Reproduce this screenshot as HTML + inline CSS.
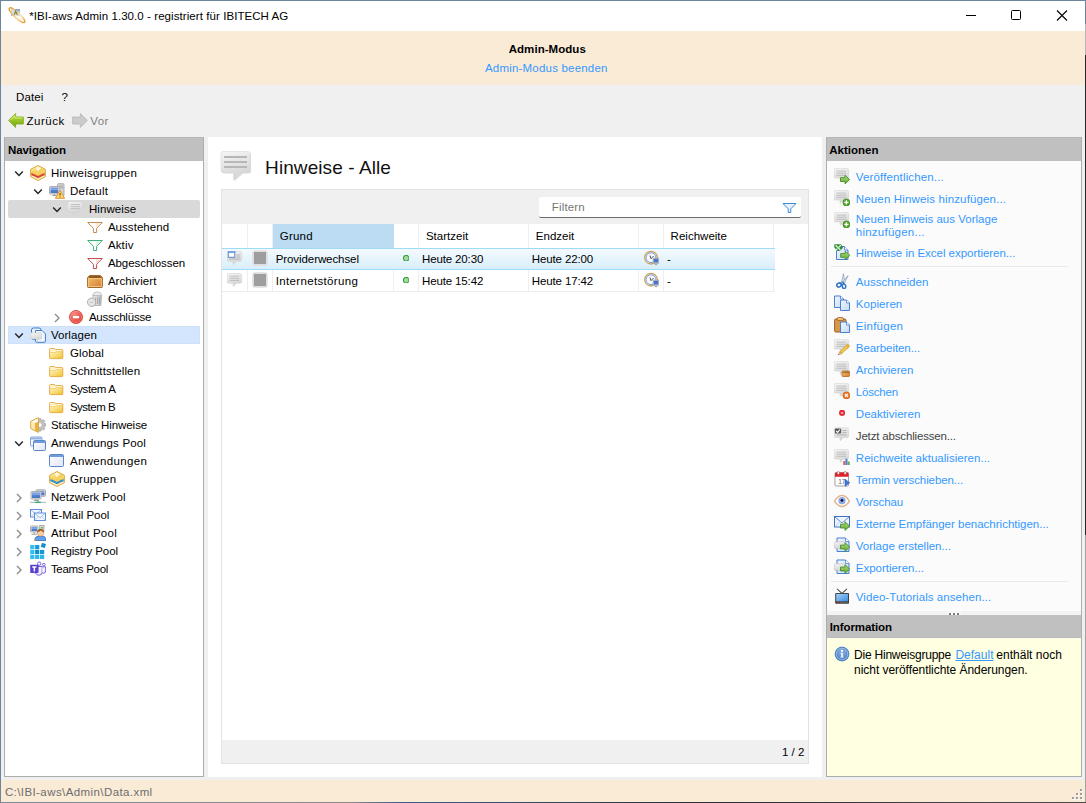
<!DOCTYPE html>
<html lang="de"><head><meta charset="utf-8"><title>IBI-aws Admin</title>
<style>
html,body{margin:0;padding:0;background:#f0f0f0;}
body{width:1086px;height:803px;overflow:hidden;font-family:"Liberation Sans",sans-serif;font-size:12px;}
#win{position:relative;width:1086px;height:803px;background:#f0f0f0;overflow:hidden;}
#win div,#win span,#win svg{position:absolute;}
.t{white-space:pre;line-height:16px;height:16px;}
.ic{width:16px;height:16px;}
.ic svg{left:0;top:0;}

</style></head><body>
<div id="win">
<svg width="0" height="0" style="left:0;top:0"><defs>
<linearGradient id="gBub" x1="0" y1="0" x2="0.3" y2="1"><stop offset="0" stop-color="#f6f6f6"/><stop offset="1" stop-color="#d4d4d4"/></linearGradient>
<linearGradient id="gGold" x1="0" y1="0" x2="1" y2="1"><stop offset="0" stop-color="#fdf0b0"/><stop offset="1" stop-color="#f2b92e"/></linearGradient>
<linearGradient id="gFold" x1="0" y1="0" x2="0.700" y2="1"><stop offset="0" stop-color="#fffbe6"/><stop offset="0.450" stop-color="#fbe9a2"/><stop offset="1" stop-color="#f4c93c"/></linearGradient>
<linearGradient id="gBox" x1="0" y1="0" x2="1" y2="1"><stop offset="0" stop-color="#f8c468"/><stop offset="1" stop-color="#cf7a3a"/></linearGradient>
<linearGradient id="gWin" x1="0" y1="0" x2="1" y2="1"><stop offset="0" stop-color="#ffffff"/><stop offset="1" stop-color="#e0e5f6"/></linearGradient>
<linearGradient id="gPage" x1="0" y1="0" x2="1" y2="1"><stop offset="0" stop-color="#f2f7fe"/><stop offset="1" stop-color="#c4d9f6"/></linearGradient>
<linearGradient id="gScr" x1="0" y1="0" x2="0" y2="1"><stop offset="0" stop-color="#6f99de"/><stop offset="0.500" stop-color="#86aae6"/><stop offset="0.550" stop-color="#4f7fcc"/><stop offset="1" stop-color="#4876c6"/></linearGradient>
<linearGradient id="gGrn" x1="0" y1="0" x2="0" y2="1"><stop offset="0" stop-color="#b4de84"/><stop offset="1" stop-color="#5ca62c"/></linearGradient>
<linearGradient id="gBack" x1="0" y1="0" x2="0" y2="1"><stop offset="0" stop-color="#c3e23a"/><stop offset="1" stop-color="#6ea412"/></linearGradient>
<radialGradient id="gRed" cx="0.35" cy="0.3" r="0.8"><stop offset="0" stop-color="#f58a80"/><stop offset="1" stop-color="#dc3b32"/></radialGradient>
<radialGradient id="gInfo" cx="0.5" cy="0.35" r="0.7"><stop offset="0" stop-color="#8db4e2"/><stop offset="1" stop-color="#3f78c0"/></radialGradient>
<linearGradient id="gTv" x1="0" y1="0" x2="1" y2="1"><stop offset="0" stop-color="#9fd0f8"/><stop offset="1" stop-color="#3f8fe0"/></linearGradient>
<linearGradient id="gCan" x1="0" y1="0" x2="1" y2="0"><stop offset="0" stop-color="#f2f2f2"/><stop offset="1" stop-color="#b8b8b8"/></linearGradient>
</defs></svg>
<!-- window frame -->
<div style="left:0;top:0;width:1086px;height:1px;background:#6a859c"></div>
<div style="left:0;top:0;width:1px;height:803px;background:#6a859c"></div>
<div style="left:1px;top:1px;width:1084px;height:30px;background:#fff"></div>
<div style="left:1085px;top:0;width:1px;height:803px;background:#a2a2a2"></div>
<div style="left:1085px;top:55px;width:1px;height:480px;background:#262626"></div>
<div style="left:1085px;top:24px;width:1px;height:31px;background:#b6b6b6"></div>
<div style="left:1085px;top:0;width:1px;height:24px;background:#6a859c"></div>
<!-- admin band -->
<div style="left:1px;top:31px;width:1084px;height:54px;background:#faebd7"></div>
<!-- status bar -->
<div style="left:1px;top:780px;width:1084px;height:22px;background:#faebd7"></div>
<div style="left:0;top:802px;width:1086px;height:1px;background:linear-gradient(90deg,#7b8b99 0,#8a8a8a 350px,#3a5f8a 400px,#2a2f3a 700px,#4a4a4a 1086px)"></div>
<!-- window buttons -->
<svg style="left:950px;top:1px" width="135" height="30" viewBox="0 0 135 30">
 <path d="M16 14.500 H26" stroke="#000" stroke-width="1"/>
 <rect x="61.500" y="9.500" width="9" height="9" rx="1" fill="none" stroke="#000" stroke-width="1"/>
 <path d="M107 9.500 L117 19.500 M117 9.500 L107 19.500" stroke="#000" stroke-width="1.1"/>
</svg>
<!-- nav panel -->
<div style="left:4px;top:137px;width:200px;height:640px;background:#fff;box-sizing:border-box;border:1px solid #adadad;border-top-color:#b6b6b6"></div>
<div style="left:5px;top:138px;width:198px;height:23px;background:#c0c0c0"></div>
<div style="left:8px;top:200px;width:192px;height:18px;background:#d9d9d9;border-radius:2px"></div>
<div style="left:8px;top:326px;width:192px;height:18px;background:#d3e6fd;box-sizing:border-box;border:1px solid #cde1fb"></div>
<!-- main -->
<div style="left:208px;top:137px;width:614px;height:640px;background:#fff"></div>
<div style="left:221px;top:189px;width:588px;height:575px;box-sizing:border-box;border:1px solid #e2e2e2;background:#fff"></div>
<div style="left:222px;top:190px;width:586px;height:34px;background:#f0f0f0"></div>
<div style="left:222px;top:740px;width:586px;height:23px;background:#f0f0f0"></div>
<!-- filter input -->
<div style="left:539px;top:197px;width:262px;height:21px;background:#fff;border-radius:2px;box-sizing:border-box;border-bottom:1px solid #6b6b6b"></div>
<svg style="left:782px;top:202px" width="15" height="12" viewBox="0 0 15 12"><path d="M1 1.500 H14 L8.800 6.800 V10.500 H6.200 V6.800 Z" fill="#e8f2fc" stroke="#3f8ad8" stroke-width="1"/></svg>
<!-- grid header -->
<div style="left:393px;top:224px;width:1px;height:68px;background:#eeeeee"></div>
<div style="left:273px;top:224px;width:121px;height:24px;background:#bcdcf4"></div>
<div style="left:247px;top:224px;width:1px;height:68px;background:#eeeeee"></div>
<div style="left:272px;top:224px;width:1px;height:68px;background:#eeeeee"></div>
<div style="left:418px;top:224px;width:1px;height:68px;background:#eeeeee"></div>
<div style="left:528px;top:224px;width:1px;height:68px;background:#eeeeee"></div>
<div style="left:638px;top:224px;width:1px;height:68px;background:#eeeeee"></div>
<div style="left:663px;top:224px;width:1px;height:68px;background:#eeeeee"></div>
<div style="left:773px;top:224px;width:1px;height:68px;background:#eeeeee"></div>
<div style="left:222px;top:291px;width:552px;height:1px;background:#ececec"></div>
<!-- selected row -->
<div style="left:222px;top:248px;width:553px;height:22px;box-sizing:border-box;border-top:1px solid #9ddcf8;border-bottom:1px solid #9ddcf8;background:linear-gradient(#f4fafe,#d8eefb)"></div>
<!-- actions panel -->
<div style="left:826px;top:137px;width:256px;height:475px;background:#fbfbfb;box-sizing:border-box;border:1px solid #adadad;border-top-color:#b6b6b6;border-bottom:none"></div>
<div style="left:827px;top:138px;width:254px;height:23px;background:#c0c0c0"></div>
<div style="left:831px;top:266px;width:237px;height:1px;background:#e8e8e8"></div>
<div style="left:831px;top:581px;width:237px;height:1px;background:#e8e8e8"></div>
<div style="left:826px;top:611px;width:256px;height:4px;background:#f3f3f3;box-sizing:border-box;border-left:1px solid #adadad;border-right:1px solid #adadad"></div>
<div style="left:947px;top:612px;width:14px;height:3px;background:#fafafa"></div>
<div style="left:949px;top:613px;width:2px;height:2px;background:#7c7c7c"></div>
<div style="left:953px;top:613px;width:2px;height:2px;background:#7c7c7c"></div>
<div style="left:957px;top:613px;width:2px;height:2px;background:#7c7c7c"></div>
<!-- info panel -->
<div style="left:826px;top:615px;width:256px;height:162px;background:#ffffe1;box-sizing:border-box;border:1px solid #adadad;border-top-color:#c0c0c0"></div>
<div style="left:827px;top:616px;width:254px;height:22px;background:#c0c0c0;box-sizing:border-box;border-bottom:1px solid #bbbbbe"></div>
<!-- resize grip -->
<svg style="left:1070px;top:787px" width="14" height="14" viewBox="0 0 14 14"><rect x="11" y="3" width="2" height="2" fill="#fffaf2"/><rect x="7" y="7" width="2" height="2" fill="#fffaf2"/><rect x="11" y="7" width="2" height="2" fill="#fffaf2"/><rect x="3" y="11" width="2" height="2" fill="#fffaf2"/><rect x="7" y="11" width="2" height="2" fill="#fffaf2"/><rect x="11" y="11" width="2" height="2" fill="#fffaf2"/><rect x="10" y="2" width="2" height="2" fill="#9a9da1"/><rect x="6" y="6" width="2" height="2" fill="#9a9da1"/><rect x="10" y="6" width="2" height="2" fill="#9a9da1"/><rect x="2" y="10" width="2" height="2" fill="#9a9da1"/><rect x="6" y="10" width="2" height="2" fill="#9a9da1"/><rect x="10" y="10" width="2" height="2" fill="#9a9da1"/></svg>

<div class="ic" style="left:30px;top:165px"><svg width="16" height="16" viewBox="0 0 16 16"><path d="M8 0.600 L15.300 4.300 V11.700 L8 15.500 L0.700 11.700 V4.300 Z" fill="#fbe7a1" stroke="#d8a030" stroke-width="1" stroke-linejoin="round"/><path d="M8 1.300 L14.500 4.600 L8 7.900 L1.500 4.600 Z" fill="url(#gGold)"/><path d="M8 1.500 L11 3 L8 6.500 L5.500 3 Z" fill="#fffbe6" opacity="0.850"/><path d="M1.400 5 L8 8.300 L14.600 5 V8 L8 11.300 L1.400 8 Z" fill="#f6cf55"/><path d="M1.300 8 Q4.500 9.200 8 10.900 Q11.500 9.200 14.700 8 V10.300 Q11.500 11.500 8 13.200 Q4.500 11.500 1.300 10.300 Z" fill="#d8483a"/><path d="M1.400 10.600 L8 13.700 L14.600 10.600 V11.400 L8 14.800 L1.400 11.400 Z" fill="#fdf0c8"/></svg></div>
<svg class="ab" style="left:13.5px;top:169.7px" width="10" height="8" viewBox="0 0 10 8"><path d="M1.2 1.5 L5 5.4 L8.800 1.500" fill="none" stroke="#262626" stroke-width="1.5"/></svg>
<div class="ic" style="left:49px;top:183px"><svg width="16" height="16" viewBox="0 0 16 16"><rect x="8.500" y="0.700" width="6.500" height="12" rx="0.800" fill="#d4d4d4" stroke="#9c9c9c" stroke-width="0.800"/><path d="M10 3 H14 M10 4.800 H14" stroke="#9a9a9a" stroke-width="0.800"/><rect x="0.5" y="3.5" width="9.5" height="7.5" rx="0.800" fill="#e4e4e4" stroke="#a4a4a4" stroke-width="0.900"/><rect x="1.5" y="4.5" width="7.5" height="5.5" fill="url(#gScr)"/><path d="M3.500 12.500 H7.500 M5.500 11.500 V12.500" stroke="#9a9a9a" stroke-width="1"/><path d="M11 7.300 L15.600 15.300 H6.400 Z" fill="#fbe071" stroke="#d98a2b" stroke-width="0.900" stroke-linejoin="round"/><path d="M11 10 V12.800 M11 13.600 V14.500" stroke="#7a4a10" stroke-width="1.100"/></svg></div>
<svg class="ab" style="left:32.5px;top:187.7px" width="10" height="8" viewBox="0 0 10 8"><path d="M1.2 1.5 L5 5.4 L8.800 1.500" fill="none" stroke="#262626" stroke-width="1.5"/></svg>
<div class="ic" style="left:68px;top:201px"><svg width="16" height="16" viewBox="0 0 16 16"><g transform="translate(0,0.0)"><path d="M1.600 0.800 H13 Q14.600 0.800 14.600 2.400 V8.900 Q14.600 10.500 13 10.500 H9.600 L6.100 13.800 V10.500 H1.600 Q0 10.500 0 8.900 V2.400 Q0 0.800 1.600 0.800 Z" fill="url(#gBub)" stroke="#cdcdcd" stroke-width="0.5"/><path d="M2.500 3.500 H12.200 M2.500 5.600 H12.200 M2.500 7.700 H12.200" stroke="#b8b8b8" stroke-width="0.850"/></g></svg></div>
<svg class="ab" style="left:51.5px;top:205.7px" width="10" height="8" viewBox="0 0 10 8"><path d="M1.2 1.5 L5 5.4 L8.800 1.500" fill="none" stroke="#262626" stroke-width="1.5"/></svg>
<div class="ic" style="left:87px;top:219px"><svg width="16" height="16" viewBox="0 0 16 16"><path d="M0.700 3.500 H15.300 L9.600 9.300 V13.500 H6.400 V9.300 Z" fill="#fff" stroke="#c98b4d" stroke-width="1" stroke-linejoin="miter"/><path d="M9 4.300 H13.500 L9 8.800 Z" fill="#f3dcc4" opacity="0.600"/></svg></div>
<div class="ic" style="left:87px;top:237px"><svg width="16" height="16" viewBox="0 0 16 16"><path d="M0.700 3.500 H15.300 L9.600 9.300 V13.500 H6.400 V9.300 Z" fill="#fff" stroke="#3fae7a" stroke-width="1" stroke-linejoin="miter"/><path d="M9 4.300 H13.500 L9 8.800 Z" fill="#c6ecd8" opacity="0.600"/></svg></div>
<div class="ic" style="left:87px;top:255px"><svg width="16" height="16" viewBox="0 0 16 16"><path d="M0.700 3.500 H15.300 L9.600 9.300 V13.500 H6.400 V9.300 Z" fill="#fff" stroke="#c0504d" stroke-width="1" stroke-linejoin="miter"/><path d="M9 4.300 H13.500 L9 8.800 Z" fill="#f2cccc" opacity="0.600"/></svg></div>
<div class="ic" style="left:87px;top:273px"><svg width="16" height="16" viewBox="0 0 16 16"><path d="M2.500 2.500 H13.500 L15.400 4.600 V13.700 Q15.400 14.500 14.600 14.500 H1.400 Q0.600 14.500 0.600 13.700 V4.600 Z" fill="url(#gBox)" stroke="#a3672c" stroke-width="1" stroke-linejoin="round"/><path d="M2.700 3 H13.300 L14.800 4.900 H1.200 Z" fill="#8c5a1e"/><rect x="1.700" y="5.700" width="12.600" height="7.700" fill="none" stroke="#f9d08c" stroke-width="0.800"/></svg></div>
<div class="ic" style="left:87px;top:291px"><svg width="16" height="16" viewBox="0 0 16 16"><path d="M6 4.500 H14.500 L13.800 14.500 H6.800 Z" fill="url(#gCan)" stroke="#a8a8a8" stroke-width="0.800"/><path d="M5.600 4.600 Q6 1 10.200 0.800 Q14.600 1 15 4.600 Z" fill="#ececec" stroke="#b5b5b5" stroke-width="0.700"/><path d="M8.500 6.500 V13 M10.500 6.500 V13 M12.500 6.500 V13" stroke="#a0a0a0" stroke-width="0.800"/><ellipse cx="4.600" cy="11.300" rx="4.100" ry="4.300" transform="rotate(-20 4.600 11.300)" fill="#e4e4e4" stroke="#aaaaaa" stroke-width="0.800"/><path d="M3 11.300 H6" stroke="#bdbdbd" stroke-width="0.800"/></svg></div>
<div class="ic" style="left:68px;top:309px"><svg width="16" height="16" viewBox="0 0 16 16"><circle cx="8" cy="8" r="6.600" fill="url(#gRed)" stroke="#d8443c" stroke-width="0.800"/><circle cx="8" cy="8" r="5.600" fill="none" stroke="#f4a29a" stroke-width="0.600" opacity="0.800"/><rect x="4.900" y="6.900" width="6.200" height="2.300" rx="0.400" fill="#fff"/></svg></div>
<svg class="ab" style="left:54px;top:313px" width="7" height="10" viewBox="0 0 7 10"><path d="M1 1 L5 5 L1 9" fill="none" stroke="#8c8c8c" stroke-width="1.350"/></svg>
<div class="ic" style="left:30px;top:327px"><svg width="16" height="16" viewBox="0 0 16 16"><rect x="1.500" y="1" width="9.500" height="11.500" rx="2" fill="#eef4fd" stroke="#3f7ccc" stroke-width="1"/><path d="M5.500 3.500 H12 L15.400 6.900 V14.200 Q15.400 15.300 14.300 15.300 H6.600 Q5.500 15.300 5.500 14.200 Z" fill="#f4f8fe" stroke="#3f7ccc" stroke-width="1"/><path d="M1 5.700 H10.500 Q11.500 5.700 11.500 6.700 V11 Q11.500 12 10.500 12 H7.800 V14 L5.800 12 H1 Q0.400 12 0.400 11 V6.700 Q0.400 5.700 1 5.700 Z" fill="url(#gBub)" stroke="#c4c4c4" stroke-width="0.500"/></svg></div>
<svg class="ab" style="left:13.5px;top:331.7px" width="10" height="8" viewBox="0 0 10 8"><path d="M1.2 1.5 L5 5.4 L8.800 1.500" fill="none" stroke="#262626" stroke-width="1.5"/></svg>
<div class="ic" style="left:49px;top:345px"><svg width="16" height="16" viewBox="0 0 16 16"><path d="M0.600 4.300 Q0.600 3.500 1.400 3.500 H5.600 L6.600 4.600 H13 Q13.800 4.600 13.800 5.400 V12.800 Q13.800 13.600 13 13.600 H1.400 Q0.600 13.600 0.600 12.800 Z" fill="url(#gFold)" stroke="#e3a63a" stroke-width="0.900"/><path d="M1.600 6.700 H6 L7 5.800 H12.800" fill="none" stroke="#fffdf0" stroke-width="0.900" opacity="0.900"/><path d="M1.400 7.600 H6.300 L7.300 6.700 H13" fill="none" stroke="#edbd50" stroke-width="0.600"/></svg></div>
<div class="ic" style="left:49px;top:363px"><svg width="16" height="16" viewBox="0 0 16 16"><path d="M0.600 4.300 Q0.600 3.500 1.400 3.500 H5.600 L6.600 4.600 H13 Q13.800 4.600 13.800 5.400 V12.800 Q13.800 13.600 13 13.600 H1.400 Q0.600 13.600 0.600 12.800 Z" fill="url(#gFold)" stroke="#e3a63a" stroke-width="0.900"/><path d="M1.600 6.700 H6 L7 5.800 H12.800" fill="none" stroke="#fffdf0" stroke-width="0.900" opacity="0.900"/><path d="M1.400 7.600 H6.300 L7.300 6.700 H13" fill="none" stroke="#edbd50" stroke-width="0.600"/></svg></div>
<div class="ic" style="left:49px;top:381px"><svg width="16" height="16" viewBox="0 0 16 16"><path d="M0.600 4.300 Q0.600 3.500 1.400 3.500 H5.600 L6.600 4.600 H13 Q13.800 4.600 13.800 5.400 V12.800 Q13.800 13.600 13 13.600 H1.400 Q0.600 13.600 0.600 12.800 Z" fill="url(#gFold)" stroke="#e3a63a" stroke-width="0.900"/><path d="M1.600 6.700 H6 L7 5.800 H12.800" fill="none" stroke="#fffdf0" stroke-width="0.900" opacity="0.900"/><path d="M1.400 7.600 H6.300 L7.300 6.700 H13" fill="none" stroke="#edbd50" stroke-width="0.600"/></svg></div>
<div class="ic" style="left:49px;top:399px"><svg width="16" height="16" viewBox="0 0 16 16"><path d="M0.600 4.300 Q0.600 3.500 1.400 3.500 H5.600 L6.600 4.600 H13 Q13.800 4.600 13.800 5.400 V12.800 Q13.800 13.600 13 13.600 H1.400 Q0.600 13.600 0.600 12.800 Z" fill="url(#gFold)" stroke="#e3a63a" stroke-width="0.900"/><path d="M1.600 6.700 H6 L7 5.800 H12.800" fill="none" stroke="#fffdf0" stroke-width="0.900" opacity="0.900"/><path d="M1.400 7.600 H6.300 L7.300 6.700 H13" fill="none" stroke="#edbd50" stroke-width="0.600"/></svg></div>
<div class="ic" style="left:30px;top:417px"><svg width="16" height="16" viewBox="0 0 16 16"><path d="M16.00 6.79 L16.00 9.01 L14.35 9.09 L13.85 10.28 L14.97 11.50 L13.40 13.07 L12.18 11.95 L10.99 12.45 L10.91 14.10 L8.69 14.10 L8.61 12.45 L7.42 11.95 L6.20 13.07 L4.63 11.50 L5.75 10.28 L5.25 9.09 L3.60 9.01 L3.60 6.79 L5.25 6.71 L5.75 5.52 L4.63 4.30 L6.20 2.73 L7.42 3.85 L8.61 3.35 L8.69 1.70 L10.91 1.70 L10.99 3.35 L12.18 3.85 L13.40 2.73 L14.97 4.30 L13.85 5.52 L14.35 6.71 Z" fill="#c4c4c4" stroke="#989898" stroke-width="0.700" stroke-linejoin="round"/><circle cx="9.800" cy="7.900" r="2.300" fill="#fff" stroke="#a5a5a5" stroke-width="0.600"/><path d="M8.300 0.700 L0.800 4.400 V11.600 L8.300 15.400 Z" fill="#fbe9b0" stroke="#d8a030" stroke-width="1" stroke-linejoin="round"/><path d="M8 1.500 L1.600 4.700 L4.800 6.300 L8 4.500 Z" fill="#fffaf0"/><path d="M4.800 6.300 L8 4.700 V14.600 L4.800 13 Z" fill="#eeb23a"/><path d="M1.500 5 L4.800 6.500 V13 L1.500 11.300 Z" fill="#fce9b4"/></svg></div>
<div class="ic" style="left:30px;top:435px"><svg width="16" height="16" viewBox="0 0 16 16"><g opacity="0.75"><rect x="0.5" y="2.0" width="11.5" height="9" rx="1" fill="url(#gWin)" stroke="#5c86c8" stroke-width="1"/><rect x="1" y="2.5" width="10.5" height="2" fill="#6f9bdc"/></g><g opacity="1.0"><rect x="3.5" y="5.5" width="12" height="10" rx="1" fill="url(#gWin)" stroke="#5c86c8" stroke-width="1"/><rect x="4" y="6" width="11" height="2" fill="#6f9bdc"/></g></svg></div>
<svg class="ab" style="left:13.5px;top:439.7px" width="10" height="8" viewBox="0 0 10 8"><path d="M1.2 1.5 L5 5.4 L8.800 1.500" fill="none" stroke="#262626" stroke-width="1.5"/></svg>
<div class="ic" style="left:49px;top:453px"><svg width="16" height="16" viewBox="0 0 16 16"><g opacity="1.0"><rect x="0.5" y="1.5" width="14" height="12" rx="1" fill="url(#gWin)" stroke="#5c86c8" stroke-width="1"/><rect x="1" y="2" width="13" height="2" fill="#6f9bdc"/></g></svg></div>
<div class="ic" style="left:49px;top:471px"><svg width="16" height="16" viewBox="0 0 16 16"><path d="M8 0.600 L15.300 4.300 V11.700 L8 15.500 L0.700 11.700 V4.300 Z" fill="#fbe7a1" stroke="#d8a030" stroke-width="1" stroke-linejoin="round"/><path d="M8 1.300 L14.500 4.600 L8 7.900 L1.500 4.600 Z" fill="url(#gGold)"/><path d="M8 1.500 L11 3 L8 6.500 L5.500 3 Z" fill="#fffbe6" opacity="0.850"/><path d="M1.400 5 L8 8.300 L14.600 5 V8 L8 11.300 L1.400 8 Z" fill="#f6cf55"/><path d="M1.300 8 Q4.500 9.200 8 10.900 Q11.500 9.200 14.700 8 V10.300 Q11.500 11.500 8 13.200 Q4.500 11.500 1.300 10.300 Z" fill="#2f8fd0"/><path d="M1.400 10.600 L8 13.700 L14.600 10.600 V11.400 L8 14.800 L1.400 11.400 Z" fill="#fdf0c8"/></svg></div>
<div class="ic" style="left:30px;top:489px"><svg width="16" height="16" viewBox="0 0 16 16"><rect x="6.0" y="0.8" width="9.5" height="6.5" rx="0.800" fill="#e4e4e4" stroke="#a4a4a4" stroke-width="0.900"/><rect x="7.0" y="1.8" width="7.5" height="4.5" fill="url(#gScr)"/><rect x="1.0" y="2.5" width="10" height="7.5" rx="0.800" fill="#e4e4e4" stroke="#a4a4a4" stroke-width="0.900"/><rect x="2.0" y="3.5" width="8" height="5.5" fill="url(#gScr)"/><path d="M3.800 11.300 H8.600" stroke="#9d9d9d" stroke-width="1.200"/><path d="M6.200 10.500 V11.300" stroke="#9d9d9d" stroke-width="1.500"/><path d="M0 13.400 H16" stroke="#b9c4c4" stroke-width="1.300"/><path d="M8 11.500 V13.400 M5 13.400 H11" stroke="#3fb07a" stroke-width="1.400"/></svg></div>
<svg class="ab" style="left:16px;top:493px" width="7" height="10" viewBox="0 0 7 10"><path d="M1 1 L5 5 L1 9" fill="none" stroke="#8c8c8c" stroke-width="1.350"/></svg>
<div class="ic" style="left:30px;top:507px"><svg width="16" height="16" viewBox="0 0 16 16"><rect x="0.5" y="2.5" width="11" height="7.5" fill="#f2f7fe" stroke="#5585d5" stroke-width="0.900"/><path d="M1 3 L6.0 7.27 L11 3" fill="none" stroke="#8aaee6" stroke-width="0.800"/><path d="M1 9.5 L4.5600000000000005 6.25 M11 9.5 L7.4399999999999995 6.25" stroke="#a9c4ec" stroke-width="0.700"/><rect x="4.5" y="6.0" width="11" height="7.5" fill="#f2f7fe" stroke="#5585d5" stroke-width="0.900"/><path d="M5 6.5 L10.0 10.77 L15 6.5" fill="none" stroke="#8aaee6" stroke-width="0.800"/><path d="M5 13.0 L8.56 9.75 M15 13.0 L11.44 9.75" stroke="#a9c4ec" stroke-width="0.700"/></svg></div>
<svg class="ab" style="left:16px;top:511px" width="7" height="10" viewBox="0 0 7 10"><path d="M1 1 L5 5 L1 9" fill="none" stroke="#8c8c8c" stroke-width="1.350"/></svg>
<div class="ic" style="left:30px;top:525px"><svg width="16" height="16" viewBox="0 0 16 16"><rect x="9.700" y="0.500" width="4.300" height="6" fill="#d6d6d6" stroke="#9a9a9a" stroke-width="0.700"/><rect x="11.200" y="2" width="1.400" height="1.600" fill="#3fae3f"/><rect x="0.5" y="1.0" width="7.5" height="6" rx="0.800" fill="#e4e4e4" stroke="#a4a4a4" stroke-width="0.900"/><rect x="1.5" y="2.0" width="5.5" height="4" fill="url(#gScr)"/><path d="M1.500 9.300 H7 M4.200 7.500 V9.300" stroke="#a0a0a0" stroke-width="1.100"/><path d="M4.600 15.600 Q5 11.300 8.500 11.300 H12.600 Q15.800 11.300 16 15.600 Z" fill="#5aa0ee" stroke="#2e62c0" stroke-width="0.800"/><circle cx="10.600" cy="7.900" r="3.300" fill="#f7cfa6" stroke="#c98a55" stroke-width="0.500"/><path d="M7.200 7.600 Q7 4 10.600 4 Q14.300 4 14 7.600 Q12 6.600 10.800 5.600 Q9.500 6.800 7.200 7.600 Z" fill="#9a5a1e"/><circle cx="4.800" cy="15" r="0.900" fill="#f0a050"/></svg></div>
<svg class="ab" style="left:16px;top:529px" width="7" height="10" viewBox="0 0 7 10"><path d="M1 1 L5 5 L1 9" fill="none" stroke="#8c8c8c" stroke-width="1.350"/></svg>
<div class="ic" style="left:30px;top:543px"><svg width="16" height="16" viewBox="0 0 16 16"><rect x="0.2" y="2.0" width="4.200" height="4.200" fill="#35bdf0"/><rect x="5.1" y="2.0" width="4.200" height="4.200" fill="#1c9bd6"/><rect x="0.2" y="6.9" width="4.200" height="4.200" fill="#35bdf0"/><rect x="5.1" y="6.9" width="4.200" height="4.200" fill="#0f8fcc"/><rect x="10.0" y="6.9" width="4.200" height="4.200" fill="#1597d2"/><rect x="0.2" y="11.8" width="4.200" height="4.200" fill="#35bdf0"/><rect x="5.1" y="11.8" width="4.200" height="4.200" fill="#2fb6ec"/><rect x="10.0" y="11.8" width="4.200" height="4.200" fill="#2fb6ec"/><rect x="11.300" y="0.300" width="4.200" height="4.200" fill="#0f8fcc" transform="rotate(15 13.400 2.400)"/></svg></div>
<svg class="ab" style="left:16px;top:547px" width="7" height="10" viewBox="0 0 7 10"><path d="M1 1 L5 5 L1 9" fill="none" stroke="#8c8c8c" stroke-width="1.350"/></svg>
<div class="ic" style="left:30px;top:561px"><svg width="16" height="16" viewBox="0 0 16 16"><circle cx="9.200" cy="2.700" r="1.700" fill="#fff" stroke="#6a52d8" stroke-width="0.900"/><circle cx="13.800" cy="3.600" r="1.300" fill="#fff" stroke="#6a52d8" stroke-width="0.900"/><path d="M5.500 5.500 H12.200 V11 Q12.200 14.200 8.900 14.300 Q6.500 14.300 5.500 12 Z" fill="#f3f0fd" stroke="#6a52d8" stroke-width="0.900"/><path d="M12.300 5.800 H15.700 V10 Q15.700 12 13.800 12.200 Q12.800 12.200 12.300 11.600" fill="#f2effd" stroke="#6a52d8" stroke-width="0.900"/><rect x="0.200" y="3.800" width="8.300" height="8.300" rx="0.800" fill="#5b3fd0"/><path d="M2.300 6 H6.400 M4.350 6 V10.400" stroke="#fff" stroke-width="1.400"/></svg></div>
<svg class="ab" style="left:16px;top:565px" width="7" height="10" viewBox="0 0 7 10"><path d="M1 1 L5 5 L1 9" fill="none" stroke="#8c8c8c" stroke-width="1.350"/></svg>
<div class="ic" style="left:8px;top:7px;width:18px;height:17px"><svg width="18" height="17" viewBox="0 0 18 17"><defs><linearGradient id="gRing" gradientUnits="userSpaceOnUse" x1="-10.600" y1="0" x2="10.600" y2="0"><stop offset="0" stop-color="#e79a25"/><stop offset="0.300" stop-color="#f3cf98"/><stop offset="0.650" stop-color="#f7e2bd"/><stop offset="1" stop-color="#e79a25"/></linearGradient></defs><rect x="3" y="2.200" width="9" height="6.800" fill="#a4c0de"/><rect x="3" y="2.200" width="9" height="1.100" fill="#7b98b8"/><g transform="translate(9 8.200) rotate(43)"><ellipse cx="0" cy="0" rx="10.400" ry="2.700" fill="#fff4df" fill-opacity="0.600" stroke="url(#gRing)" stroke-width="1.300"/><path d="M-9 2 Q-2 3.400 6 2.400" fill="none" stroke="#e9a030" stroke-width="0.900" stroke-dasharray="0.900 0.700"/></g><path d="M6.300 7.800 L7.600 4.200 L9.500 7.800" fill="none" stroke="#857512" stroke-width="1.300" opacity="0.850"/></svg></div>
<div class="ic" style="left:7.500px;top:113px;height:15px"><svg width="16" height="15" viewBox="0 0 16 15"><path d="M0.700 7.500 L7.600 0.600 V4 H15.300 V11 H7.600 V14.400 Z" fill="url(#gBack)" stroke="#7aad1c" stroke-width="0.900" stroke-linejoin="round"/><path d="M2.500 7 L6.800 2.700 V4.900 H14.400" fill="none" stroke="#e4f5a0" stroke-width="0.900" opacity="0.900"/></svg></div>
<div class="ic" style="left:71.500px;top:113px;height:15px"><svg width="16" height="15" viewBox="0 0 16 15"><path d="M15.300 7.500 L8.400 0.600 V4 H0.700 V11 H8.400 V14.400 Z" fill="#cbcbcb" stroke="#b9b9b9" stroke-width="0.900" stroke-linejoin="round"/></svg></div>
<div class="ic" style="left:220px;top:150px;width:33px;height:33px"><svg width="33" height="33" viewBox="0 0 33 33"><defs><filter id="fSh" x="-10%" y="-10%" width="130%" height="130%"><feGaussianBlur stdDeviation="0.700"/></filter></defs><path transform="translate(1,1)" d="M3 1.500 H28 Q30 1.500 30 3.500 V20.500 Q30 22.500 28 22.500 H22 L13.500 30 V22.500 H3 Q1 22.500 1 20.500 V3.500 Q1 1.500 3 1.500 Z" fill="#bdbdbd" opacity="0.550" filter="url(#fSh)"/><path d="M3 1.500 H28 Q30 1.500 30 3.500 V20.500 Q30 22.500 28 22.500 H21.500 L13.500 30 V22.500 H3 Q1 22.500 1 20.500 V3.500 Q1 1.500 3 1.500 Z" fill="url(#gBub)" stroke="#d8d8d8" stroke-width="0.600"/><path d="M4 7 H27 M4 12 H27 M4 17 H27" stroke="#b7b7b7" stroke-width="1.800"/></svg></div>
<div class="ic" style="left:227px;top:251px"><svg width="16" height="16" viewBox="0 0 16 16"><g transform="translate(0,-0.3)"><path d="M1.600 0.800 H13 Q14.600 0.800 14.600 2.400 V8.900 Q14.600 10.500 13 10.500 H9.600 L6.100 13.800 V10.500 H1.600 Q0 10.500 0 8.900 V2.400 Q0 0.800 1.600 0.800 Z" fill="url(#gBub)" stroke="#cdcdcd" stroke-width="0.5"/></g><path d="M9.500 4 H12.800 M9.500 6 H12.800 M2.300 8 H12.800" stroke="#b2b2b2" stroke-width="1"/><rect x="1.300" y="0.800" width="6.500" height="5.500" fill="#fff" stroke="#5a84cc" stroke-width="1"/><rect x="0.800" y="0.300" width="7.500" height="1.800" fill="#7aa2e2"/></svg></div>
<div class="ic" style="left:227px;top:273px"><svg width="16" height="16" viewBox="0 0 16 16"><g transform="translate(0,-0.3)"><path d="M1.600 0.800 H13 Q14.600 0.800 14.600 2.400 V8.900 Q14.600 10.500 13 10.500 H9.600 L6.100 13.800 V10.500 H1.600 Q0 10.500 0 8.900 V2.400 Q0 0.800 1.600 0.800 Z" fill="url(#gBub)" stroke="#cdcdcd" stroke-width="0.5"/><path d="M2.500 3.500 H12.200 M2.500 5.600 H12.200 M2.500 7.700 H12.200" stroke="#b8b8b8" stroke-width="0.850"/></g></svg></div>
<div class="ic" style="left:252px;top:250px"><svg width="16" height="16" viewBox="0 0 16 16"><rect x="0.200" y="0.200" width="15.500" height="15.500" rx="2.500" fill="#dedede"/><rect x="2" y="2" width="12" height="12" fill="#9e9e9e"/></svg></div>
<div class="ic" style="left:402.800px;top:254.7px;width:7px;height:7px"><svg width="6.4" height="6.4" viewBox="0 0 7 7"><path d="M2.300 0.500 H4.700 L6.500 2.300 V4.700 L4.700 6.500 H2.300 L0.500 4.700 V2.300 Z" fill="#a2d8a2" stroke="#35a035" stroke-width="1.200" stroke-linejoin="round"/></svg></div>
<div class="ic" style="left:644px;top:250.3px"><svg width="16" height="16" viewBox="0 0 16 16"><circle cx="7" cy="7.700" r="6.300" fill="#fff" stroke="#c9a458" stroke-width="1.300"/><circle cx="7" cy="7.700" r="4.900" fill="#fafcff" stroke="#6a8ee0" stroke-width="0.900"/><path d="M6 5.500 L7 8.700 L9.600 6" fill="none" stroke="#555" stroke-width="1"/><rect x="9" y="8" width="5.800" height="5.300" fill="#c8c8c8" stroke="#9a9a9a" stroke-width="0.500"/><rect x="9.700" y="8.700" width="4.400" height="3.800" fill="#4a74cc"/><path d="M10.800 14.600 H13.200 M12 13.300 V14.600" stroke="#9a9a9a" stroke-width="0.900"/></svg></div>
<div class="ic" style="left:252px;top:272px"><svg width="16" height="16" viewBox="0 0 16 16"><rect x="0.200" y="0.200" width="15.500" height="15.500" rx="2.500" fill="#dedede"/><rect x="2" y="2" width="12" height="12" fill="#9e9e9e"/></svg></div>
<div class="ic" style="left:402.800px;top:276.7px;width:7px;height:7px"><svg width="6.4" height="6.4" viewBox="0 0 7 7"><path d="M2.300 0.500 H4.700 L6.500 2.300 V4.700 L4.700 6.500 H2.300 L0.500 4.700 V2.300 Z" fill="#a2d8a2" stroke="#35a035" stroke-width="1.200" stroke-linejoin="round"/></svg></div>
<div class="ic" style="left:644px;top:272.3px"><svg width="16" height="16" viewBox="0 0 16 16"><circle cx="7" cy="7.700" r="6.300" fill="#fff" stroke="#c9a458" stroke-width="1.300"/><circle cx="7" cy="7.700" r="4.900" fill="#fafcff" stroke="#6a8ee0" stroke-width="0.900"/><path d="M6 5.500 L7 8.700 L9.600 6" fill="none" stroke="#555" stroke-width="1"/><rect x="9" y="8" width="5.800" height="5.300" fill="#c8c8c8" stroke="#9a9a9a" stroke-width="0.500"/><rect x="9.700" y="8.700" width="4.400" height="3.800" fill="#4a74cc"/><path d="M10.800 14.600 H13.200 M12 13.300 V14.600" stroke="#9a9a9a" stroke-width="0.900"/></svg></div>
<div class="ic" style="left:834px;top:646px"><svg width="16" height="16" viewBox="0 0 16 16"><circle cx="8" cy="8" r="6.900" fill="url(#gInfo)" stroke="#3f74c0" stroke-width="0.900"/><circle cx="8" cy="8" r="5.800" fill="none" stroke="#a9c6ea" stroke-width="0.700"/><circle cx="8" cy="4.900" r="1.100" fill="#fff"/><path d="M6.600 6.900 H8.800 V10.700 H9.600 V11.600 H6.400 V10.700 H7.300 V7.800 H6.600 Z" fill="#fff"/></svg></div>
<div class="ic" style="left:834px;top:168px"><svg width="16" height="16" viewBox="0 0 16 16"><g transform="translate(0,-0.4)"><path d="M1.600 0.800 H13 Q14.600 0.800 14.600 2.400 V8.900 Q14.600 10.500 13 10.500 H9.600 L6.100 13.800 V10.500 H1.600 Q0 10.500 0 8.900 V2.400 Q0 0.800 1.600 0.800 Z" fill="url(#gBub)" stroke="#cdcdcd" stroke-width="0.5"/><path d="M2.500 3.500 H12.200 M2.500 5.600 H12.200 M2.500 7.700 H12.200" stroke="#b8b8b8" stroke-width="0.850"/></g><path transform="translate(0,0)" d="M6.500 9.700 H11 V7.300 L15.700 11.600 L11 15.900 V13.500 H6.500 Z" fill="url(#gGrn)" stroke="#46902a" stroke-width="0.9" stroke-linejoin="round"/></svg></div>
<div class="ic" style="left:834px;top:190px"><svg width="16" height="16" viewBox="0 0 16 16"><g transform="translate(0,-0.4)"><path d="M1.600 0.800 H13 Q14.600 0.800 14.600 2.400 V8.900 Q14.600 10.500 13 10.500 H9.600 L6.100 13.800 V10.500 H1.600 Q0 10.500 0 8.900 V2.400 Q0 0.800 1.600 0.800 Z" fill="url(#gBub)" stroke="#cdcdcd" stroke-width="0.5"/><path d="M2.500 3.500 H12.200 M2.500 5.600 H12.200 M2.500 7.700 H12.200" stroke="#b8b8b8" stroke-width="0.850"/></g><circle cx="12.400" cy="12.400" r="3.500" fill="#58a52e" stroke="#3a8418" stroke-width="0.7"/><path d="M12.400 10.300 V14.500 M10.300 12.400 H14.500" stroke="#fff" stroke-width="1.300"/></svg></div>
<div class="ic" style="left:834px;top:212px"><svg width="16" height="16" viewBox="0 0 16 16"><g transform="translate(0,-0.4)"><path d="M1.600 0.800 H13 Q14.600 0.800 14.600 2.400 V8.900 Q14.600 10.500 13 10.500 H9.600 L6.100 13.800 V10.500 H1.600 Q0 10.500 0 8.900 V2.400 Q0 0.800 1.600 0.800 Z" fill="url(#gBub)" stroke="#cdcdcd" stroke-width="0.5"/><path d="M2.500 3.500 H12.200 M2.500 5.600 H12.200 M2.500 7.700 H12.200" stroke="#b8b8b8" stroke-width="0.850"/></g><circle cx="12.400" cy="12.400" r="3.500" fill="#58a52e" stroke="#3a8418" stroke-width="0.7"/><path d="M12.400 10.300 V14.500 M10.300 12.400 H14.500" stroke="#fff" stroke-width="1.300"/></svg></div>
<div class="ic" style="left:834px;top:244px"><svg width="16" height="16" viewBox="0 0 16 16"><path d="M2.5 2.5 H10.5 L14.0 6.0 V15.5 H2.5 Z" fill="url(#gPage)" stroke="#4b7fd0" stroke-width="1" stroke-linejoin="round"/><path d="M10.5 2.5 V6.0 H14.0" fill="#fff" stroke="#4b7fd0" stroke-width="0.800" stroke-linejoin="round"/><path d="M0.300 0.300 H7 L9 3.500 L6.500 7 H3.500 L0.300 3.500 Z" fill="#2f8a3c"/><path d="M1.500 1.200 L6.800 6.500 M6.800 1.200 L4.800 3.200 M3.400 4.600 L1.500 6.500" stroke="#d8f0d0" stroke-width="1.300"/><path transform="translate(0.2,-0.2)" d="M6.500 9.700 H11 V7.300 L15.700 11.600 L11 15.900 V13.500 H6.500 Z" fill="url(#gGrn)" stroke="#46902a" stroke-width="0.9" stroke-linejoin="round"/></svg></div>
<div class="ic" style="left:834px;top:273px"><svg width="16" height="16" viewBox="0 0 16 16"><path d="M7.600 9 L9.500 0.800 L10.500 8.500 Z" fill="#e8eef6" stroke="#6f86a8" stroke-width="0.600"/><path d="M8.200 9.500 L14 2.600 L10.300 10.500 Z" fill="#dfe6f0" stroke="#6f86a8" stroke-width="0.600"/><ellipse cx="5" cy="12" rx="2.300" ry="1.900" transform="rotate(-30 5 12)" fill="none" stroke="#2f74c8" stroke-width="1.500"/><ellipse cx="10" cy="13.300" rx="1.700" ry="2.200" transform="rotate(-10 10 13.300)" fill="none" stroke="#2f74c8" stroke-width="1.500"/><path d="M6.500 10.800 L9 9.300 L10 11.300" fill="none" stroke="#2f74c8" stroke-width="1.300"/></svg></div>
<div class="ic" style="left:834px;top:295px"><svg width="16" height="16" viewBox="0 0 16 16"><path d="M0.5 1.0 H6.5 L9.5 4.0 V12.5 H0.5 Z" fill="url(#gPage)" stroke="#4b7fd0" stroke-width="1" stroke-linejoin="round"/><path d="M6.5 1.0 V4.0 H9.5" fill="#fff" stroke="#4b7fd0" stroke-width="0.800" stroke-linejoin="round"/><path d="M6.5 5.0 H12.5 L15.5 8.0 V15.5 H6.5 Z" fill="url(#gPage)" stroke="#4b7fd0" stroke-width="1" stroke-linejoin="round"/><path d="M12.5 5.0 V8.0 H15.5" fill="#fff" stroke="#4b7fd0" stroke-width="0.800" stroke-linejoin="round"/></svg></div>
<div class="ic" style="left:834px;top:317px"><svg width="16" height="16" viewBox="0 0 16 16"><rect x="0.600" y="2" width="11.400" height="13" rx="1.300" fill="#d9964a" stroke="#9a5f20" stroke-width="1"/><rect x="3.300" y="0.600" width="6" height="3" rx="0.800" fill="#f0c080" stroke="#9a5f20" stroke-width="0.800"/><path d="M6.5 5.0 H12.5 L15.5 8.0 V15.5 H6.5 Z" fill="url(#gPage)" stroke="#4b7fd0" stroke-width="1" stroke-linejoin="round"/><path d="M12.5 5.0 V8.0 H15.5" fill="#fff" stroke="#4b7fd0" stroke-width="0.800" stroke-linejoin="round"/></svg></div>
<div class="ic" style="left:834px;top:339px"><svg width="16" height="16" viewBox="0 0 16 16"><g transform="translate(0,-0.4)"><path d="M1.600 0.800 H13 Q14.600 0.800 14.600 2.400 V8.900 Q14.600 10.500 13 10.500 H9.600 L6.100 13.800 V10.500 H1.600 Q0 10.500 0 8.900 V2.400 Q0 0.800 1.600 0.800 Z" fill="url(#gBub)" stroke="#cdcdcd" stroke-width="0.5"/><path d="M2.500 3.500 H12.200 M2.500 5.600 H12.200 M2.500 7.700 H12.200" stroke="#b8b8b8" stroke-width="0.850"/></g><path d="M13.600 5 L15.600 7 L7.600 14.800 L5.700 12.900 Z" fill="#f7c948" stroke="#c98a1a" stroke-width="0.700"/><path d="M5.700 12.900 L7.600 14.800 L4.300 15.800 Z" fill="#f6d8a8" stroke="#b07a30" stroke-width="0.500"/><path d="M4.300 15.800 L5.300 15.500 L4.600 14.800 Z" fill="#4a2a08"/><path d="M12.500 6.100 L14.500 8.100" stroke="#e08a2a" stroke-width="0.800"/></svg></div>
<div class="ic" style="left:834px;top:361px"><svg width="16" height="16" viewBox="0 0 16 16"><g transform="translate(0,-0.4)"><path d="M1.600 0.800 H13 Q14.600 0.800 14.600 2.400 V8.900 Q14.600 10.500 13 10.500 H9.600 L6.100 13.800 V10.500 H1.600 Q0 10.500 0 8.900 V2.400 Q0 0.800 1.600 0.800 Z" fill="url(#gBub)" stroke="#cdcdcd" stroke-width="0.5"/><path d="M2.500 3.500 H12.200 M2.500 5.600 H12.200 M2.500 7.700 H12.200" stroke="#b8b8b8" stroke-width="0.850"/></g><rect x="8" y="10" width="7.600" height="5.500" rx="0.900" fill="url(#gBox)" stroke="#b06a28" stroke-width="0.800"/><path d="M8.600 11.300 H15" stroke="#8c5a1e" stroke-width="0.900"/></svg></div>
<div class="ic" style="left:834px;top:383px"><svg width="16" height="16" viewBox="0 0 16 16"><g transform="translate(0,-0.4)"><path d="M1.600 0.800 H13 Q14.600 0.800 14.600 2.400 V8.900 Q14.600 10.500 13 10.500 H9.600 L6.100 13.800 V10.500 H1.600 Q0 10.500 0 8.900 V2.400 Q0 0.800 1.600 0.800 Z" fill="url(#gBub)" stroke="#cdcdcd" stroke-width="0.5"/><path d="M2.500 3.500 H12.200 M2.500 5.600 H12.200 M2.500 7.700 H12.200" stroke="#b8b8b8" stroke-width="0.850"/></g><circle cx="12.400" cy="12.400" r="3.500" fill="#ea7a25" stroke="#c95a10" stroke-width="0.700"/><path d="M10.900 10.900 L13.900 13.900 M13.900 10.900 L10.900 13.900" stroke="#fff" stroke-width="1.200"/></svg></div>
<div class="ic" style="left:834px;top:405px"><svg width="16" height="16" viewBox="0 0 16 16"><rect x="5.900" y="5.700" width="4.300" height="4.300" rx="1.300" fill="#f28a94" stroke="#dc1020" stroke-width="1.400"/></svg></div>
<div class="ic" style="left:834px;top:427px"><svg width="16" height="16" viewBox="0 0 16 16"><g transform="translate(0,0.0)"><path d="M1.600 0.800 H13 Q14.600 0.800 14.600 2.400 V8.900 Q14.600 10.500 13 10.500 H9.600 L6.100 13.800 V10.500 H1.600 Q0 10.500 0 8.900 V2.400 Q0 0.800 1.600 0.800 Z" fill="url(#gBub)" stroke="#cdcdcd" stroke-width="0.5"/></g><path d="M8.500 3.500 H12.500 M8.500 5.600 H12.500 M2.500 7.900 H12.500" stroke="#b2b2b2" stroke-width="1"/><rect x="0.800" y="1.400" width="6.400" height="5.200" rx="1" fill="#585858"/><path d="M2.200 4 L3.600 5.400 L6 2.500" fill="none" stroke="#fff" stroke-width="1.100"/></svg></div>
<div class="ic" style="left:834px;top:449px"><svg width="16" height="16" viewBox="0 0 16 16"><g transform="translate(0,-0.4)"><path d="M1.600 0.800 H13 Q14.600 0.800 14.600 2.400 V8.900 Q14.600 10.500 13 10.500 H9.600 L6.100 13.800 V10.500 H1.600 Q0 10.500 0 8.900 V2.400 Q0 0.800 1.600 0.800 Z" fill="url(#gBub)" stroke="#cdcdcd" stroke-width="0.5"/><path d="M2.500 3.500 H12.200 M2.500 5.600 H12.200 M2.500 7.700 H12.200" stroke="#b8b8b8" stroke-width="0.850"/></g><rect x="9.200" y="12" width="2.100" height="4" fill="#e2605a"/><rect x="11.400" y="9.800" width="2.100" height="6.200" fill="#5080d4"/><rect x="13.600" y="12.500" width="2.100" height="3.500" fill="#5ab05a"/></svg></div>
<div class="ic" style="left:834px;top:471px"><svg width="16" height="16" viewBox="0 0 16 16"><rect x="1" y="1.500" width="13.500" height="13.500" rx="1" fill="#fff" stroke="#9a9a9a" stroke-width="0.900"/><path d="M1 2.500 Q1 1.500 2 1.500 H13.500 Q14.500 1.500 14.500 2.500 V5.800 H1 Z" fill="#e0202a"/><rect x="3.300" y="0.300" width="2" height="3.300" rx="0.800" fill="#f4f4f4" stroke="#b05050" stroke-width="0.500"/><rect x="10.200" y="0.300" width="2" height="3.300" rx="0.800" fill="#f4f4f4" stroke="#b05050" stroke-width="0.500"/><text x="4.200" y="12.600" font-family="Liberation Sans, sans-serif" font-size="6.500" fill="#666">17</text><path d="M11 8.300 L15.800 11.800 L11 15.300 Z" fill="#3f78d8" stroke="#2a58b0" stroke-width="0.500"/></svg></div>
<div class="ic" style="left:834px;top:493px"><svg width="16" height="16" viewBox="0 0 16 16"><path d="M0.600 8.200 Q4 2.600 8 2.600 Q12 2.600 15.400 8.200 Q12 13.400 8 13.400 Q4 13.400 0.600 8.200 Z" fill="#fff" stroke="#e6b58c" stroke-width="1.500"/><circle cx="8" cy="7.700" r="3.600" fill="#8ea8ec"/><circle cx="8" cy="7.400" r="1.400" fill="#101830"/></svg></div>
<div class="ic" style="left:834px;top:515px"><svg width="16" height="16" viewBox="0 0 16 16"><rect x="0.500" y="1.500" width="15" height="10.500" fill="#eef4fd" stroke="#3f72c4" stroke-width="1"/><path d="M1 2 L8 8 L15 2" fill="none" stroke="#5a8ad8" stroke-width="1"/><path d="M1 11.500 L6 6.500 M15 11.500 L10 6.500" stroke="#a9c4ec" stroke-width="0.800"/><path transform="translate(0,-0.5)" d="M6.500 9.700 H11 V7.300 L15.700 11.600 L11 15.900 V13.500 H6.500 Z" fill="url(#gGrn)" stroke="#46902a" stroke-width="0.9" stroke-linejoin="round"/></svg></div>
<div class="ic" style="left:834px;top:537px"><svg width="16" height="16" viewBox="0 0 16 16"><path d="M3.0 1.0 H11.5 L15.0 4.5 V14.5 H3.0 Z" fill="url(#gPage)" stroke="#4b7fd0" stroke-width="1" stroke-linejoin="round"/><path d="M11.5 1.0 V4.5 H15.0" fill="#fff" stroke="#4b7fd0" stroke-width="0.800" stroke-linejoin="round"/><rect x="0.400" y="4.800" width="10.600" height="6.800" rx="1.500" fill="url(#gBub)" stroke="#c0c0c0" stroke-width="0.600"/><path transform="translate(0,-1.6)" d="M6.500 9.700 H11 V7.300 L15.700 11.600 L11 15.900 V13.500 H6.500 Z" fill="url(#gGrn)" stroke="#46902a" stroke-width="0.9" stroke-linejoin="round"/></svg></div>
<div class="ic" style="left:834px;top:559px"><svg width="16" height="16" viewBox="0 0 16 16"><path d="M3.0 1.0 H11.5 L15.0 4.5 V14.5 H3.0 Z" fill="url(#gPage)" stroke="#4b7fd0" stroke-width="1" stroke-linejoin="round"/><path d="M11.5 1.0 V4.5 H15.0" fill="#fff" stroke="#4b7fd0" stroke-width="0.800" stroke-linejoin="round"/><rect x="0.400" y="4.800" width="10.600" height="6.800" rx="1.500" fill="url(#gBub)" stroke="#c0c0c0" stroke-width="0.600"/><path transform="translate(0,-1.6)" d="M6.500 9.700 H11 V7.300 L15.700 11.600 L11 15.900 V13.500 H6.500 Z" fill="url(#gGrn)" stroke="#46902a" stroke-width="0.9" stroke-linejoin="round"/></svg></div>
<div class="ic" style="left:834px;top:588px"><svg width="16" height="16" viewBox="0 0 16 16"><path d="M3 0.800 L8 5.500 L13 0.800" fill="none" stroke="#555" stroke-width="1.100"/><rect x="1.200" y="5" width="13.800" height="10.800" rx="0.800" fill="#3c3c3c"/><rect x="2.200" y="5.900" width="11.800" height="7.400" fill="url(#gTv)"/><rect x="3.200" y="14" width="2" height="0.900" fill="#e03030"/><path d="M6.500 14.450 H13.500" stroke="#888" stroke-width="0.800" stroke-dasharray="1.200 0.800"/></svg></div>
<span class="t" id="t0" style="left:29.2px;top:8px;font-size:11.5px;font-weight:400;color:#000;letter-spacing:0.071px;">*IBI-aws Admin 1.30.0 - registriert für IBITECH AG</span>
<span class="t" id="t1" style="left:508.7px;top:41px;font-size:11.5px;font-weight:700;color:#000;letter-spacing:0.049px;">Admin-Modus</span>
<span class="t" id="t2" style="left:485.0px;top:60px;font-size:11.5px;font-weight:400;color:#3399ff;letter-spacing:0.194px;">Admin-Modus beenden</span>
<span class="t" id="t3" style="left:16.0px;top:89px;font-size:11.5px;font-weight:400;color:#000;letter-spacing:0.108px;">Datei</span>
<span class="t" id="t4" style="left:61.6px;top:89px;font-size:11.5px;font-weight:400;color:#000;letter-spacing:0.000px;">?</span>
<span class="t" id="t5" style="left:26.4px;top:113px;font-size:11.5px;font-weight:400;color:#000;letter-spacing:0.541px;">Zurück</span>
<span class="t" id="t6" style="left:90.3px;top:113px;font-size:11.5px;font-weight:400;color:#7f7f7f;letter-spacing:0.345px;">Vor</span>
<span class="t" id="t7" style="left:7.9px;top:142px;font-size:11.5px;font-weight:700;color:#000;letter-spacing:-0.070px;">Navigation</span>
<span class="t" id="t8" style="left:829.3px;top:142px;font-size:11.5px;font-weight:700;color:#000;letter-spacing:-0.013px;">Aktionen</span>
<span class="t" id="t9" style="left:829.7px;top:619px;font-size:11.5px;font-weight:700;color:#000;letter-spacing:-0.086px;">Information</span>
<span class="t" id="t10" style="left:265.1px;top:160px;font-size:19px;font-weight:400;color:#111;letter-spacing:0.079px;">Hinweise - Alle</span>
<span class="t" id="t11" style="left:50.9px;top:165px;font-size:11.5px;font-weight:400;color:#000;letter-spacing:0.274px;">Hinweisgruppen</span>
<span class="t" id="t12" style="left:69.9px;top:183px;font-size:11.5px;font-weight:400;color:#000;letter-spacing:0.280px;">Default</span>
<span class="t" id="t13" style="left:88.9px;top:201px;font-size:11.5px;font-weight:400;color:#000;letter-spacing:0.091px;">Hinweise</span>
<span class="t" id="t14" style="left:107.9px;top:219px;font-size:11.5px;font-weight:400;color:#000;letter-spacing:0.045px;">Ausstehend</span>
<span class="t" id="t15" style="left:107.9px;top:237px;font-size:11.5px;font-weight:400;color:#000;letter-spacing:0.156px;">Aktiv</span>
<span class="t" id="t16" style="left:107.9px;top:255px;font-size:11.5px;font-weight:400;color:#000;letter-spacing:-0.062px;">Abgeschlossen</span>
<span class="t" id="t17" style="left:107.9px;top:273px;font-size:11.5px;font-weight:400;color:#000;letter-spacing:0.056px;">Archiviert</span>
<span class="t" id="t18" style="left:107.9px;top:291px;font-size:11.5px;font-weight:400;color:#000;letter-spacing:-0.024px;">Gelöscht</span>
<span class="t" id="t19" style="left:88.9px;top:309px;font-size:11.5px;font-weight:400;color:#000;letter-spacing:-0.206px;">Ausschlüsse</span>
<span class="t" id="t20" style="left:50.9px;top:327px;font-size:11.5px;font-weight:400;color:#000;letter-spacing:0.074px;">Vorlagen</span>
<span class="t" id="t21" style="left:69.9px;top:345px;font-size:11.5px;font-weight:400;color:#000;letter-spacing:0.158px;">Global</span>
<span class="t" id="t22" style="left:69.9px;top:363px;font-size:11.5px;font-weight:400;color:#000;letter-spacing:0.135px;">Schnittstellen</span>
<span class="t" id="t23" style="left:69.9px;top:381px;font-size:11.5px;font-weight:400;color:#000;letter-spacing:-0.360px;">System A</span>
<span class="t" id="t24" style="left:69.9px;top:399px;font-size:11.5px;font-weight:400;color:#000;letter-spacing:-0.502px;">System B</span>
<span class="t" id="t25" style="left:50.9px;top:417px;font-size:11.5px;font-weight:400;color:#000;letter-spacing:-0.048px;">Statische Hinweise</span>
<span class="t" id="t26" style="left:50.9px;top:435px;font-size:11.5px;font-weight:400;color:#000;letter-spacing:0.165px;">Anwendungs Pool</span>
<span class="t" id="t27" style="left:69.9px;top:453px;font-size:11.5px;font-weight:400;color:#000;letter-spacing:0.341px;">Anwendungen</span>
<span class="t" id="t28" style="left:69.9px;top:471px;font-size:11.5px;font-weight:400;color:#000;letter-spacing:0.233px;">Gruppen</span>
<span class="t" id="t29" style="left:50.9px;top:489px;font-size:11.5px;font-weight:400;color:#000;letter-spacing:0.035px;">Netzwerk Pool</span>
<span class="t" id="t30" style="left:50.9px;top:507px;font-size:11.5px;font-weight:400;color:#000;letter-spacing:-0.037px;">E-Mail Pool</span>
<span class="t" id="t31" style="left:50.9px;top:525px;font-size:11.5px;font-weight:400;color:#000;letter-spacing:0.265px;">Attribut Pool</span>
<span class="t" id="t32" style="left:50.9px;top:543px;font-size:11.5px;font-weight:400;color:#000;letter-spacing:-0.107px;">Registry Pool</span>
<span class="t" id="t33" style="left:50.9px;top:561px;font-size:11.5px;font-weight:400;color:#000;letter-spacing:-0.289px;">Teams Pool</span>
<span class="t" id="t34" style="left:551.8px;top:199px;font-size:11.5px;font-weight:400;color:#777;letter-spacing:0.164px;">Filtern</span>
<span class="t" id="t35" style="left:279.8px;top:228px;font-size:11.5px;font-weight:400;color:#000;letter-spacing:0.206px;">Grund</span>
<span class="t" id="t36" style="left:425.9px;top:228px;font-size:11.5px;font-weight:400;color:#000;letter-spacing:0.024px;">Startzeit</span>
<span class="t" id="t37" style="left:535.8px;top:228px;font-size:11.5px;font-weight:400;color:#000;letter-spacing:0.006px;">Endzeit</span>
<span class="t" id="t38" style="left:670.6px;top:228px;font-size:11.5px;font-weight:400;color:#000;letter-spacing:0.015px;">Reichweite</span>
<span class="t" id="t39" style="left:275.7px;top:251px;font-size:11.5px;font-weight:400;color:#000;letter-spacing:-0.078px;">Providerwechsel</span>
<span class="t" id="t40" style="left:422.0px;top:251px;font-size:11.5px;font-weight:400;color:#000;letter-spacing:-0.134px;">Heute 20:30</span>
<span class="t" id="t41" style="left:531.8px;top:251px;font-size:11.5px;font-weight:400;color:#000;letter-spacing:-0.134px;">Heute 22:00</span>
<span class="t" id="t42" style="left:666.9px;top:251px;font-size:11.5px;font-weight:400;color:#000;letter-spacing:0.000px;">-</span>
<span class="t" id="t43" style="left:275.7px;top:273px;font-size:11.5px;font-weight:400;color:#000;letter-spacing:0.349px;">Internetstörung</span>
<span class="t" id="t44" style="left:422.0px;top:273px;font-size:11.5px;font-weight:400;color:#000;letter-spacing:-0.134px;">Heute 15:42</span>
<span class="t" id="t45" style="left:531.8px;top:273px;font-size:11.5px;font-weight:400;color:#000;letter-spacing:-0.134px;">Heute 17:42</span>
<span class="t" id="t46" style="left:666.9px;top:273px;font-size:11.5px;font-weight:400;color:#000;letter-spacing:0.000px;">-</span>
<span class="t" id="t47" style="left:781.9px;top:744px;font-size:11.5px;font-weight:400;color:#000;letter-spacing:0.022px;">1 / 2</span>
<span class="t" id="t48" style="left:4.9px;top:784px;font-size:11.5px;font-weight:400;color:#6d6d6d;letter-spacing:0.412px;">C:\IBI-aws\Admin\Data.xml</span>
<span class="t" id="t49" style="left:855.8px;top:169px;font-size:11.5px;font-weight:400;color:#3399ff;letter-spacing:0.146px;">Veröffentlichen...</span>
<span class="t" id="t50" style="left:855.8px;top:191px;font-size:11.5px;font-weight:400;color:#3399ff;letter-spacing:0.148px;">Neuen Hinweis hinzufügen...</span>
<span class="t" id="t51" style="left:855.8px;top:211px;font-size:11.5px;font-weight:400;color:#3399ff;letter-spacing:0.009px;">Neuen Hinweis aus Vorlage</span>
<span class="t" id="t52" style="left:855.8px;top:224px;font-size:11.5px;font-weight:400;color:#3399ff;letter-spacing:0.242px;">hinzufügen...</span>
<span class="t" id="t53" style="left:855.8px;top:245px;font-size:11.5px;font-weight:400;color:#3399ff;letter-spacing:-0.029px;">Hinweise in Excel exportieren...</span>
<span class="t" id="t54" style="left:855.8px;top:274px;font-size:11.5px;font-weight:400;color:#3399ff;letter-spacing:0.021px;">Ausschneiden</span>
<span class="t" id="t55" style="left:855.8px;top:296px;font-size:11.5px;font-weight:400;color:#3399ff;letter-spacing:0.057px;">Kopieren</span>
<span class="t" id="t56" style="left:855.8px;top:318px;font-size:11.5px;font-weight:400;color:#3399ff;letter-spacing:0.249px;">Einfügen</span>
<span class="t" id="t57" style="left:855.8px;top:340px;font-size:11.5px;font-weight:400;color:#3399ff;letter-spacing:-0.078px;">Bearbeiten...</span>
<span class="t" id="t58" style="left:855.8px;top:362px;font-size:11.5px;font-weight:400;color:#3399ff;letter-spacing:-0.003px;">Archivieren</span>
<span class="t" id="t59" style="left:855.8px;top:384px;font-size:11.5px;font-weight:400;color:#3399ff;letter-spacing:-0.198px;">Löschen</span>
<span class="t" id="t60" style="left:855.8px;top:406px;font-size:11.5px;font-weight:400;color:#3399ff;letter-spacing:0.057px;">Deaktivieren</span>
<span class="t" id="t61" style="left:855.8px;top:428px;font-size:11.5px;font-weight:400;color:#444;letter-spacing:-0.165px;">Jetzt abschliessen...</span>
<span class="t" id="t62" style="left:855.8px;top:450px;font-size:11.5px;font-weight:400;color:#3399ff;letter-spacing:0.026px;">Reichweite aktualisieren...</span>
<span class="t" id="t63" style="left:855.8px;top:472px;font-size:11.5px;font-weight:400;color:#3399ff;letter-spacing:-0.095px;">Termin verschieben...</span>
<span class="t" id="t64" style="left:855.8px;top:494px;font-size:11.5px;font-weight:400;color:#3399ff;letter-spacing:-0.069px;">Vorschau</span>
<span class="t" id="t65" style="left:855.8px;top:516px;font-size:11.5px;font-weight:400;color:#3399ff;letter-spacing:-0.002px;">Externe Empfänger benachrichtigen...</span>
<span class="t" id="t66" style="left:855.8px;top:538px;font-size:11.5px;font-weight:400;color:#3399ff;letter-spacing:0.002px;">Vorlage erstellen...</span>
<span class="t" id="t67" style="left:855.8px;top:560px;font-size:11.5px;font-weight:400;color:#3399ff;letter-spacing:-0.015px;">Exportieren...</span>
<span class="t" id="t68" style="left:855.8px;top:589px;font-size:11.5px;font-weight:400;color:#3399ff;letter-spacing:0.073px;">Video-Tutorials ansehen...</span>
<span class="t" id="t69" style="left:854.1px;top:647px;font-size:12px;font-weight:400;color:#000;letter-spacing:-0.226px;">Die Hinweisgruppe </span>
<span class="t" id="t70" style="left:955.4px;top:647px;font-size:12px;font-weight:400;color:#3399ff;letter-spacing:0.010px;text-decoration:underline;">Default</span>
<span class="t" id="t71" style="left:992.9px;top:647px;font-size:12px;font-weight:400;color:#000;letter-spacing:0.022px;"> enthält noch</span>
<span class="t" id="t72" style="left:854.1px;top:662px;font-size:12px;font-weight:400;color:#000;letter-spacing:-0.053px;">nicht veröffentlichte Änderungen.</span>
</div>
</body></html>
